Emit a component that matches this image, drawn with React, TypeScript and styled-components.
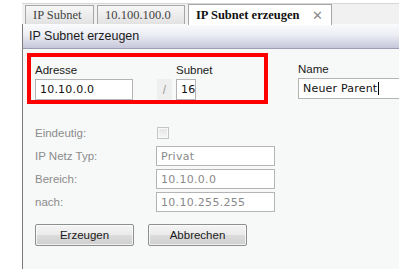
import styled, { createGlobalStyle } from "styled-components";

const GlobalStyle = createGlobalStyle`
  html, body {
    margin: 0;
    padding: 0;
    background: #ffffff;
  }
  body {
    font-family: "Liberation Sans", "DejaVu Sans", sans-serif;
    font-size: 11px;
  }
`;

const Page = styled.div`
  width: 420px;
  height: 280px;
  box-sizing: border-box;
  padding: 3px 0 0 22px;
  overflow: hidden;
`;

const Panel = styled.div`
  width: 377px;
  display: flex;
  flex-direction: column;
`;

const TabBar = styled.div`
  height: 21px;
  display: flex;
  align-items: flex-end;
  gap: 3px;
  padding-left: 3px;
  background: #f1f1f1;
  border-top: 1px solid #d6d6d6;
  box-sizing: border-box;
`;

const Tab = styled.div<{ $active?: boolean; $w: number }>`
  width: ${(p) => p.$w}px;
  height: ${(p) => (p.$active ? 21 : 19)}px;
  box-sizing: border-box;
  display: flex;
  align-items: center;
  padding-left: ${(p) => (p.$active ? 7 : 7)}px;
  border: 1px solid #a6a6a6;
  border-bottom: none;
  font-family: "Liberation Serif", serif;
  font-size: 12.5px;
  font-weight: ${(p) => (p.$active ? 700 : 400)};
  color: ${(p) => (p.$active ? "#111" : "#444")};
  background: ${(p) =>
    p.$active ? "#ffffff" : "linear-gradient(#f7f7f7, #e2e2e2)"};
  margin-bottom: ${(p) => (p.$active ? -1 : 0)}px;
  position: relative;
`;

const Close = styled.span`
  margin-left: auto;
  margin-right: 8px;
  font-family: "Liberation Sans", sans-serif;
  font-size: 13px;
  font-weight: 400;
  color: #8a8a8a;
`;

const Header = styled.div`
  height: 24px;
  display: flex;
  align-items: center;
  padding-left: 6px;
  border-left: 1px solid #7b7b7b;
  border-bottom: 1px solid #9c9cb2;
  background: linear-gradient(#fbfbfd, #eceef4 45%, #c6c6da);
  font-size: 12.5px;
  color: #1b1b1b;
`;

const Body = styled.div`
  height: 220px;
  border-left: 1px solid #7b7b7b;
  background: #f7f8f8;
  padding: 4px 0 0 4px;
  box-sizing: border-box;
  display: flex;
  flex-direction: column;
  overflow: hidden;
`;

const TopRow = styled.div`
  display: flex;
  align-items: flex-start;
`;

const Highlight = styled.div`
  width: 241px;
  flex-shrink: 0;
  height: 51px;
  box-sizing: border-box;
  border: 4px solid #ff0000;
  padding: 5px 0 0 4px;
  display: flex;
  align-items: flex-end;
`;

const Field = styled.div`
  display: flex;
  flex-direction: column;
  gap: 2px;
`;

const Label = styled.div<{ $muted?: boolean }>`
  font-size: 11.5px;
  line-height: 14px;
  color: ${(p) => (p.$muted ? "#8c8c8c" : "#1a1a1a")};
`;

const Input = styled.div<{ $w: number; $muted?: boolean }>`
  width: ${(p) => p.$w}px;
  flex-shrink: 0;
  height: ${(p) => (p.$muted ? 20 : 21)}px;
  box-sizing: border-box;
  border: 1px solid #b4b4b4;
  background: #ffffff;
  display: flex;
  align-items: center;
  padding-left: 4px;
  font-family: "DejaVu Sans", sans-serif;
  font-size: 11px;
  letter-spacing: ${(p) => (p.$muted ? 0.3 : 0.2)}px;
  color: ${(p) => (p.$muted ? "#8a8a8a" : "#111")};
  white-space: nowrap;
  overflow: hidden;
`;

const Slash = styled.div`
  width: 15px;
  height: 21px;
  margin: 0 4px 0 24px;
  background: #efefef;
  display: flex;
  align-items: center;
  justify-content: center;
  color: #9a9a9a;
  font-size: 12px;
`;

const Caret = styled.span`
  display: inline-block;
  width: 1px;
  height: 13px;
  background: #000;
  margin-left: 1px;
`;

const NameField = styled(Field)`
  margin: 9px 0 0 30px;
`;

const Rows = styled.div`
  margin-top: 19px;
  padding-left: 8px;
  display: flex;
  flex-direction: column;
  gap: 3px;
`;

const Row = styled.div`
  display: grid;
  grid-template-columns: 121px auto;
  align-items: center;
  height: 20px;
`;

const Check = styled.div`
  width: 12px;
  height: 12px;
  margin-left: 1px;
  box-sizing: border-box;
  border: 1px solid #c4c4c4;
  background: linear-gradient(#e4e4e4, #f6f6f6);
  box-shadow: inset 0 0 0 1px #fafafa;
`;

const Buttons = styled.div`
  margin-top: 12px;
  padding-left: 8px;
  display: flex;
  gap: 14px;
`;

const Button = styled.div`
  width: 99px;
  height: 22px;
  box-sizing: border-box;
  border: 1px solid #8e8f8f;
  border-radius: 2px;
  background: linear-gradient(#f4f4f4 0%, #ebebeb 48%, #dcdcdc 52%, #cfcfcf 100%);
  box-shadow: inset 0 0 0 1px rgba(255, 255, 255, 0.7);
  display: flex;
  align-items: center;
  justify-content: center;
  font-size: 11.5px;
  color: #1a1a1a;
`;

export default function App() {
  return (
    <>
      <GlobalStyle />
      <Page>
        <Panel>
          <TabBar>
            <Tab $w={69}>IP Subnet</Tab>
            <Tab $w={88}>10.100.100.0</Tab>
            <Tab $w={144} $active>
              IP Subnet erzeugen
              <Close>✕</Close>
            </Tab>
          </TabBar>
          <Header>IP Subnet erzeugen</Header>
          <Body>
            <TopRow>
              <Highlight>
                <Field>
                  <Label>Adresse</Label>
                  <Input $w={98}>10.10.0.0</Input>
                </Field>
                <Slash>/</Slash>
                <Field>
                  <Label>Subnet</Label>
                  <Input $w={20}>16</Input>
                </Field>
              </Highlight>
              <NameField>
                <Label>Name</Label>
                <Input $w={120}>
                  Neuer Parent
                  <Caret />
                </Input>
              </NameField>
            </TopRow>
            <Rows>
              <Row>
                <Label $muted>Eindeutig:</Label>
                <Check />
              </Row>
              <Row>
                <Label $muted>IP Netz Typ:</Label>
                <Input $w={119} $muted>Privat</Input>
              </Row>
              <Row>
                <Label $muted>Bereich:</Label>
                <Input $w={119} $muted>10.10.0.0</Input>
              </Row>
              <Row>
                <Label $muted>nach:</Label>
                <Input $w={119} $muted>10.10.255.255</Input>
              </Row>
            </Rows>
            <Buttons>
              <Button>Erzeugen</Button>
              <Button>Abbrechen</Button>
            </Buttons>
          </Body>
        </Panel>
      </Page>
    </>
  );
}
